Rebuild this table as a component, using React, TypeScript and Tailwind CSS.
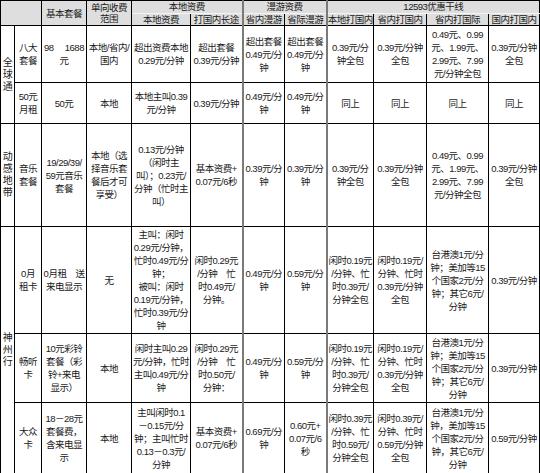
const widths = [14, 27, 45, 45, 59, 52, 42, 42, 47, 53, 62, 51];

// columns that start with the heavy grey rule
const THICK = new Set([6, 8]);

type Row = { h: number; cells: string[][] };

const c3 = ["0.49元、0.99", "元、1.99元、", "2.99元、7.99", "元/分钟全包"];
const intl = ["台港澳1元/分", "钟；美加等15", "个国家2元/分", "钟；其它6元/", "分钟"];

const rows: Row[] = [
  {
    h: 57,
    cells: [
      ["八大", "套餐"],
      ["98\u3000 1688", "元"],
      ["本地/省内/", "国内"],
      ["超出资费本地", "0.29元/分钟"],
      ["超出套餐", "0.39元/分钟"],
      ["超出套餐", "0.49元/分", "钟"],
      ["超出套餐", "0.49元/分", "钟"],
      ["0.39元/分", "钟全包"],
      ["0.39元/分钟", "全包"],
      c3,
      ["0.39元/分钟", "全包"],
    ],
  },
  {
    h: 41,
    cells: [
      ["50元", "月租"],
      ["50元"],
      ["本地"],
      ["本地主叫0.39", "元/分钟"],
      ["0.39元/分钟"],
      ["0.49元/分", "钟"],
      ["0.49元/分", "钟"],
      ["同上"],
      ["同上"],
      ["同上"],
      ["同上"],
    ],
  },
  {
    h: 103,
    cells: [
      ["音乐", "套餐"],
      ["19/29/39/", "59元音乐", "套餐"],
      ["本地（选", "择音乐套", "餐后才可", "享受）"],
      ["0.13元/分钟", "（闲时主", "叫）；0.23元/", "分钟（忙时主", "叫）"],
      ["基本资费+", "0.07元/6秒"],
      ["0.39元/分", "钟"],
      ["0.39元/分", "钟"],
      ["0.39元/分", "钟全包"],
      ["0.39元/分钟", "全包"],
      c3,
      ["0.39元/分钟", "全包"],
    ],
  },
  {
    h: 107,
    cells: [
      ["0月", "租卡"],
      ["0月租\u3000送", "来电显示"],
      ["无"],
      ["主叫：闲时", "0.29元/分钟，", "忙时0.49元/分", "钟；", "被叫：闲时", "0.19元/分钟，", "忙时0.39元/分", "钟"],
      ["闲时0.29元", "/分钟\u3000忙", "时0.49元/", "分钟。"],
      ["0.49元/分", "钟"],
      ["0.59元/分", "钟"],
      ["闲时0.19元", "/分钟、忙", "时0.39元/", "分钟全包"],
      ["闲时0.19元/", "分钟、忙时", "0.39元/分钟", "全包"],
      intl,
      ["0.39元/分钟"],
    ],
  },
  {
    h: 69,
    cells: [
      ["畅听", "卡"],
      ["10元彩铃", "套餐（彩", "铃+来电", "显示）"],
      ["本地"],
      ["闲时主叫0.29", "元/分钟，忙时", "主叫0.49元/分", "钟"],
      ["闲时0.29元", "/分钟\u3000忙", "时0.50元/", "分钟："],
      ["0.49元/分", "钟"],
      ["0.59元/分", "钟"],
      ["闲时0.19元", "/分钟、忙", "时0.39元/", "分钟全包"],
      ["闲时0.19元/", "分钟、忙时", "0.39元/分钟", "全包"],
      intl,
      ["0.39元/分钟"],
    ],
  },
  {
    h: 71,
    cells: [
      ["大众", "卡"],
      ["18－28元", "套餐费，", "含来电显", "示"],
      ["本地"],
      ["主叫闲时0.1", "－0.15元/分", "钟；主叫忙时", "0.13－0.3元/", "分钟"],
      ["基本资费+", "0.07元/6秒"],
      ["0.69元/分", "钟"],
      ["0.60元+", "0.07元/6", "秒"],
      ["闲时0.39元", "/分钟、忙", "时0.59元/", "分钟全包"],
      ["闲时0.39元/", "分钟、忙时", "0.59元/分钟", "全包"],
      ["台港澳1元/分", "钟，美加等15", "个国家2元/分", "钟，其它6元/", "分钟"],
      ["0.59元/分钟"],
    ],
  },
];

const groups: { label: string; rows: number[] }[] = [
  { label: "全球通", rows: [0, 1] },
  { label: "动感地带", rows: [2] },
  { label: "神州行", rows: [3, 4, 5] },
];

const subHeads = ["本地资费", "打国内长途", "省内漫游", "省际漫游", "本地打国内", "省内打国内", "省内打国际", "国内打国内"];

function Lines({ lines }: { lines: string[] }) {
  return (
    <>
      {lines.map((l, i) => (
        <div key={i} className="whitespace-nowrap">
          {l}
        </div>
      ))}
    </>
  );
}

function cellCls(col: number) {
  return THICK.has(col)
    ? "border border-black border-l-2 border-l-[#7a7a7a] p-0 text-center align-middle"
    : "border border-black p-0 text-center align-middle";
}

export default function App() {
  return (
    <div className="w-[540px] h-[473px] bg-white overflow-hidden text-[#1a1a1a]">
      <table
        className="table-fixed border-collapse w-[540px] text-[9.5px] leading-[13px] tracking-[-0.5px]"
        style={{ fontFamily: '"Liberation Sans", "Noto Sans CJK SC", sans-serif' }}
      >
        <colgroup>
          {widths.map((w, i) => (
            <col key={i} style={{ width: w }} />
          ))}
        </colgroup>
        <thead>
          <tr className="h-[13px] bg-[#dedede]">
            <th colSpan={2} rowSpan={2} className="border border-black p-0" />
            <th rowSpan={2} className="border border-black p-0 font-normal align-middle">
              基本套餐
            </th>
            <th rowSpan={2} className="border border-black p-0 font-normal align-middle leading-[11px]">
              <div>单向收费</div>
              <div>范围</div>
            </th>
            <th colSpan={2} className="border border-black border-b-[#f4f4f4] p-0 font-normal leading-[12px]">
              本地资费
            </th>
            <th colSpan={2} className="border border-black border-l-2 border-l-[#7a7a7a] border-b-[#f4f4f4] p-0 font-normal leading-[12px]">
              漫游资费
            </th>
            <th colSpan={4} className="border border-black border-l-2 border-l-[#7a7a7a] border-b-[#f4f4f4] p-0 font-normal leading-[12px]">
              12593优惠干线
            </th>
            <th className="border border-black border-b-[#f4f4f4] p-0" />
          </tr>
          <tr className="h-[11px] bg-[#dedede]">
            {subHeads.map((s, i) => (
              <th key={s} className={cellCls(i + 4) + " font-normal leading-[11px] whitespace-nowrap"}>
                {s}
              </th>
            ))}
          </tr>
        </thead>
        <tbody>
          {rows.map((r, ri) => {
            const g = groups.find((gr) => gr.rows[0] === ri);
            return (
              <tr key={ri} style={{ height: r.h }}>
                {g && (
                  <td rowSpan={g.rows.length} className="border border-black p-0 text-center align-middle leading-[12px] text-[10px]">
                    <Lines lines={g.label.split("")} />
                  </td>
                )}
                {r.cells.map((c, ci) => (
                  <td key={ci} className={cellCls(ci + 1)}>
                    <Lines lines={c} />
                  </td>
                ))}
              </tr>
            );
          })}
        </tbody>
      </table>
    </div>
  );
}
